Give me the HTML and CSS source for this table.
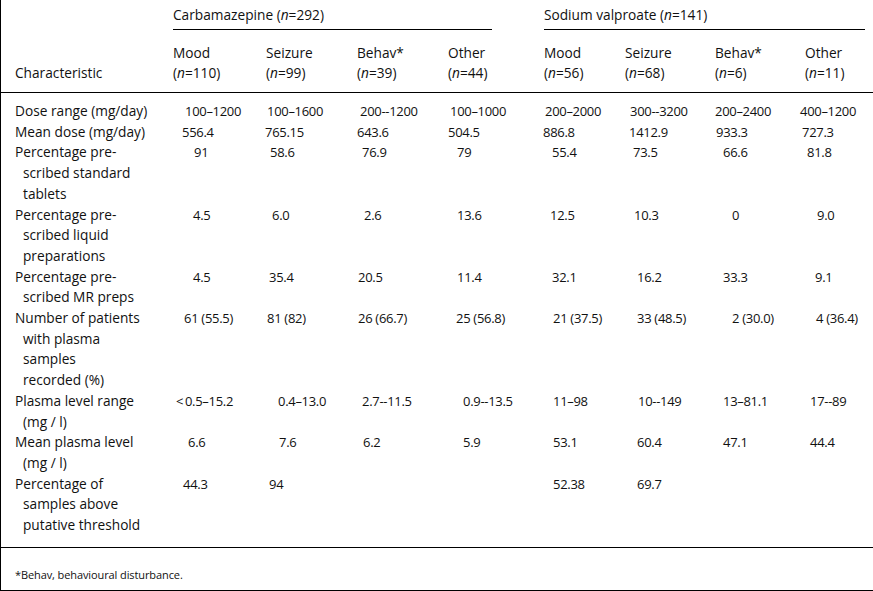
FILE: index.html
```html
<!DOCTYPE html>
<html lang="en">
<head>
<meta charset="utf-8">
<title>Table</title>
<link rel="stylesheet" href="styles.css">
</head>
<body>
<div class="frame">
<table class="t">
<colgroup>
<col class="c0"><col class="c1"><col class="c2"><col class="c3"><col class="c4"><col class="c5"><col class="c6"><col class="c7"><col class="c8">
</colgroup>
<thead>
<tr>
<th class="charh" rowspan="2">Characteristic</th>
<th colspan="4"><div class="group cbz">Carbamazepine (<i>n</i>=292)</div></th>
<th colspan="4"><div class="group sv">Sodium valproate (<i>n</i>=141)</div></th>
</tr>
<tr class="sub">
<th class="o0">Mood<br>(<i>n</i>=110)</th>
<th class="o1">Seizure<br>(<i>n</i>=99)</th>
<th class="o0">Behav*<br>(<i>n</i>=39)</th>
<th class="o0">Other<br>(<i>n</i>=44)</th>
<th class="o1">Mood<br>(<i>n</i>=56)</th>
<th class="o0">Seizure<br>(<i>n</i>=68)</th>
<th class="o0">Behav*<br>(<i>n</i>=6)</th>
<th class="o5">Other<br>(<i>n</i>=11)</th>
</tr>
</thead>
<tbody>
<tr>
<td class="lab">Dose range (mg/day)</td>
<td class="num o12">100–1200</td><td class="num o2">100–1600</td><td class="num o3">200--1200</td><td class="num o2">100–1000</td>
<td class="num o2">200–2000</td><td class="num o5">300--3200</td><td class="num o0">200–2400</td><td class="num o0">400–1200</td>
</tr>
<tr>
<td class="lab">Mean dose (mg/day)</td>
<td class="num o9">556.4</td><td class="num o0">765.15</td><td class="num o0">643.6</td><td class="num o0">504.5</td>
<td class="num o0">886.8</td><td class="num o4">1412.9</td><td class="num o1">933.3</td><td class="num o2">727.3</td>
</tr>
<tr>
<td class="lab">Percentage pre-<br>scribed standard<br>tablets</td>
<td class="num o21">91</td><td class="num o5">58.6</td><td class="num o5">76.9</td><td class="num o9">79</td>
<td class="num o9">55.4</td><td class="num o8">73.5</td><td class="num o8">66.6</td><td class="num o7">81.8</td>
</tr>
<tr>
<td class="lab">Percentage pre-<br>scribed liquid<br>preparations</td>
<td class="num o20">4.5</td><td class="num o7">6.0</td><td class="num o7">2.6</td><td class="num o9">13.6</td>
<td class="num o7">12.5</td><td class="num o9">10.3</td><td class="num o17">0</td><td class="num o17">9.0</td>
</tr>
<tr>
<td class="lab">Percentage pre-<br>scribed MR preps</td>
<td class="num o20">4.5</td><td class="num o4">35.4</td><td class="num o1">20.5</td><td class="num o9">11.4</td>
<td class="num o9">32.1</td><td class="num o12">16.2</td><td class="num o8">33.3</td><td class="num o15">9.1</td>
</tr>
<tr>
<td class="lab">Number of patients<br>with plasma<br>samples<br>recorded (%)</td>
<td class="num o11">61 (55.5)</td><td class="num o2">81 (82)</td><td class="num o1">26 (66.7)</td><td class="num o8">25 (56.8)</td>
<td class="num o10">21 (37.5)</td><td class="num o12">33 (48.5)</td><td class="num o17">2 (30.0)</td><td class="num o16">4 (36.4)</td>
</tr>
<tr>
<td class="lab">Plasma level range<br>(mg / l)</td>
<td class="num o3">&lt;&#8201;0.5–15.2</td><td class="num o13">0.4–13.0</td><td class="num o5">2.7--11.5</td><td class="num o15">0.9--13.5</td>
<td class="num o10">11–98</td><td class="num o13">10--149</td><td class="num o8">13–81.1</td><td class="num o10">17--89</td>
</tr>
<tr>
<td class="lab">Mean plasma level<br>(mg / l)</td>
<td class="num o15">6.6</td><td class="num o14">7.6</td><td class="num o6">6.2</td><td class="num o15">5.9</td>
<td class="num o10">53.1</td><td class="num o12">60.4</td><td class="num o8">47.1</td><td class="num o10">44.4</td>
</tr>
<tr>
<td class="lab">Percentage of<br>samples above<br>putative threshold</td>
<td class="num o10">44.3</td><td class="num o4">94</td><td class="num"></td><td class="num"></td>
<td class="num o10">52.38</td><td class="num o12">69.7</td><td class="num"></td><td class="num"></td>
</tr>
</tbody>
</table>
<div class="note">*Behav, behavioural disturbance.</div>
</div>
</body>
</html>
```

FILE: styles.css
```css
body {
  margin: 0;
  background: #fff;
  color: #111;
  font-family: "Open Sans", "Noto Sans", sans-serif;
}

.frame {
  width: 873px;
  height: 591px;
  box-sizing: border-box;
  border-left: 1px solid #000;
}

.t {
  width: 872px;
  border-collapse: collapse;
  table-layout: fixed;
  font-size: 13.7px;
}

.c0 { width: 172px; }
.c1 { width: 92px; }
.c2 { width: 92px; }
.c3 { width: 91px; }
.c4 { width: 95px; }
.c5 { width: 82px; }
.c6 { width: 90px; }
.c7 { width: 85px; }
.c8 { width: 73px; }

.t th,
.t td {
  padding: 0;
  font-weight: normal;
  text-align: left;
  vertical-align: top;
  white-space: nowrap;
}

.group {
  padding: 5px 0 4px;
  line-height: 20px;
  border-bottom: 1px solid #000;
}

.group.cbz { width: 319px; }
.group.sv { width: 321px; margin-left: 1px; }

.t .charh {
  vertical-align: bottom;
  padding: 0 0 9px 14px;
  line-height: 20px;
  border-bottom: 1px solid #000;
}

.sub th {
  padding-top: 13px;
  padding-bottom: 9px;
  line-height: 20px;
  border-bottom: 1px solid #000;
}

.t td {
  line-height: 20.7px;
}

.t td.lab {
  padding-left: 22px;
  text-indent: -8px;
}

.num {
  font-size: 13px;
  letter-spacing: -0.3px;
}

tbody tr:first-child td { padding-top: 8px; }
tbody tr:last-child td {
  padding-bottom: 11px;
  border-bottom: 1px solid #000;
}

.note {
  padding: 20px 0 8px 14px;
  font-size: 11px;
  line-height: 14px;
  letter-spacing: -0.1px;
  border-bottom: 1px solid #000;
}

.t .o0 { padding-left: 0; }
.t .o1 { padding-left: 1px; }
.t .o2 { padding-left: 2px; }
.t .o3 { padding-left: 3px; }
.t .o4 { padding-left: 4px; }
.t .o5 { padding-left: 5px; }
.t .o6 { padding-left: 6px; }
.t .o7 { padding-left: 7px; }
.t .o8 { padding-left: 8px; }
.t .o9 { padding-left: 9px; }
.t .o10 { padding-left: 10px; }
.t .o11 { padding-left: 11px; }
.t .o12 { padding-left: 12px; }
.t .o13 { padding-left: 13px; }
.t .o14 { padding-left: 14px; }
.t .o15 { padding-left: 15px; }
.t .o16 { padding-left: 16px; }
.t .o17 { padding-left: 17px; }
.t .o20 { padding-left: 20px; }
.t .o21 { padding-left: 21px; }
```
